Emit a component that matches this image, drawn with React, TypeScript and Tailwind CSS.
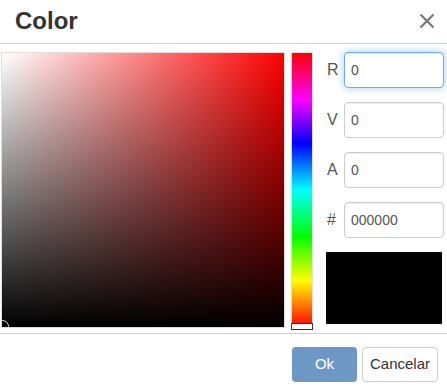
import React from "react";

const font = { fontFamily: '"Liberation Sans", Arial, sans-serif' };

function Row({ label, value, focused }: { label: string; value: string; focused?: boolean }) {
  return (
    <div className="flex items-center h-[36px]">
      <div className="w-[18px] pl-[1px] text-[16px] text-[#555]">{label}</div>
      <div
        className={
          "w-[100px] h-[36px] rounded-[4px] border flex items-center pl-[6px] text-[14px] text-[#555] bg-white " +
          (focused
            ? "border-[#66afe9] shadow-[inset_0_1px_1px_rgba(0,0,0,0.075),0_0_8px_rgba(102,175,233,0.6)]"
            : "border-[#ccc] shadow-[inset_0_1px_1px_rgba(0,0,0,0.075)]")
        }
      >
        {value}
      </div>
    </div>
  );
}

export default function App() {
  return (
    <div className="w-[447px] h-[391px] bg-white overflow-hidden" style={font}>
      <div className="h-[44px] border-b border-[#cfcfcf] flex items-center justify-between pl-[15px] pr-[12px]">
        <div className="text-[24px] font-bold text-[#333] leading-none mt-[-2px]">Color</div>
        <svg width="16" height="16" viewBox="0 0 16 16" className="mt-[-2px]">
          <path d="M1.5 1.5 L14.5 14.5 M14.5 1.5 L1.5 14.5" stroke="#777" strokeWidth="2.2" />
        </svg>
      </div>
      <div className="h-[290px] border-b border-[#cfcfcf] pt-[8px] pl-[1px] flex">
        <div className="relative w-[284px] h-[276px] border border-[#ddd] overflow-hidden">
          <div className="absolute inset-0 bg-[linear-gradient(to_right,#ffffff,#ff0000)]" />
          <div className="absolute inset-0 bg-[linear-gradient(to_bottom,rgba(0,0,0,0),#000000)]" />
          <div className="absolute left-[-6px] bottom-[-6px] w-[13px] h-[13px] rounded-full border border-[#ddd]" />
        </div>
        <div className="relative ml-[6px] w-[22px] h-[276px]">
          <div className="absolute inset-0 border border-[#ddd] bg-[linear-gradient(to_bottom,#ff0000_0%,#ff00ff_17%,#0000ff_33%,#00ffff_50%,#00ff00_67%,#ffff00_83%,#ff0000_100%)]" />
          <div className="absolute left-0 right-0 bottom-[-2px] h-[7px] bg-white border border-[#333]" />
        </div>
        <div className="ml-[13px] flex flex-col gap-[14px]">
          <Row label="R" value="0" focused />
          <Row label="V" value="0" />
          <Row label="A" value="0" />
          <Row label="#" value="000000" />
          <div className="w-[116px] h-[72px] bg-black" />
        </div>
      </div>
      <div className="flex justify-end items-start pt-[13px] pr-[9px] gap-[5px]">
        <div className="w-[65px] h-[35px] rounded-[4px] bg-[#6d98c6] text-white text-[15px] flex items-center justify-center">
          Ok
        </div>
        <div className="w-[76px] h-[35px] rounded-[4px] border border-[#ccc] bg-white text-[#333] text-[15px] flex items-center justify-center">
          Cancelar
        </div>
      </div>
    </div>
  );
}
